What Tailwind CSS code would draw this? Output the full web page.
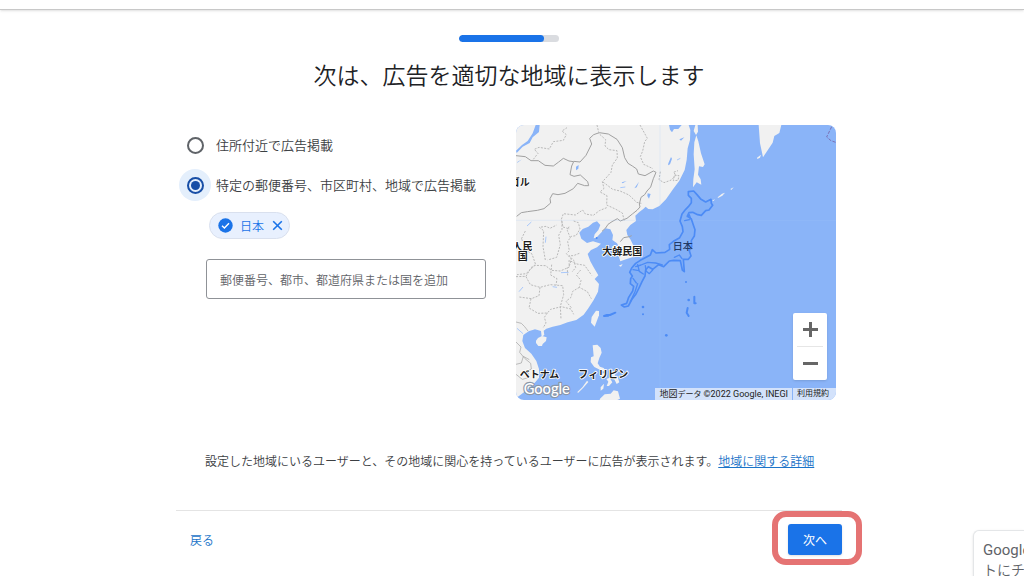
<!DOCTYPE html>
<html lang="ja">
<head>
  <meta charset="UTF-8" />
  <meta name="viewport" content="width=device-width, initial-scale=1.0" />
  <title>広告の地域設定</title>
  <script src="https://cdn.jsdelivr.net/npm/@tailwindcss/browser@4"></script>
</head>
<body class="bg-white text-[#3c4043] font-['Noto_Sans_CJK_JP',sans-serif]">
<div class="relative min-h-screen overflow-hidden">

  <header class="h-2.5 border-b border-[#c8c8c8] shadow-sm"></header>

  <main class="pr-1.5">
    <div class="max-w-[666px] mx-auto">

      <div class="w-[100px] h-[7px] mx-auto mt-[25px] rounded-full bg-[#dadce0] overflow-hidden" role="progressbar" aria-label="進捗" aria-valuenow="85" aria-valuemin="0" aria-valuemax="100">
        <div class="h-full rounded-full bg-[#1a73e8]" style="width: 85%"></div>
      </div>

      <h1 class="mt-4 text-center text-[23px] leading-8 font-[350] text-[#202124]">次は、広告を適切な地域に表示します</h1>

      <section class="mt-[35px] flex flex-wrap justify-between gap-y-6 pr-1.5">
        <form class="w-[310px] pt-1" onsubmit="return false">
          <label class="flex items-center h-8 ml-[3px] gap-[5px] text-[13px] font-[350] whitespace-nowrap">
            <span class="size-8 shrink-0 rounded-full flex items-center justify-center">
              <input type="radio" name="area" class="appearance-none size-[17px] rounded-full border-2 border-[#5f6368]" />
            </span>
            住所付近で広告掲載
          </label>
          <label class="flex items-center h-8 mt-2 ml-[3px] gap-[5px] text-[13px] font-[350] whitespace-nowrap">
            <span class="size-8 shrink-0 rounded-full bg-[#e4effc] flex items-center justify-center">
              <input type="radio" name="area" checked class="appearance-none size-[17px] rounded-full border-2 border-[#174ea6] bg-[#174ea6] bg-clip-content p-[2px]" />
            </span>
            特定の郵便番号、市区町村、地域で広告掲載
          </label>

          <div class="mt-[11px] ml-[33px] flex w-fit items-center h-[27px] pl-2 pr-1.5 rounded-full border border-[#d9e0ee] bg-[#e8f0fe] text-xs text-[#1a73e8]">
            <svg class="size-[15px]" viewBox="0 0 15 15" aria-hidden="true">
              <circle cx="7.5" cy="7.5" r="7.2" fill="#1a73e8" />
              <path d="M4 7.8l2.4 2.3 4.6-4.8" fill="none" stroke="#fff" stroke-width="1.4" />
            </svg>
            <span class="ml-[7px] font-[350]">日本</span>
            <button type="button" class="ml-2 cursor-pointer" aria-label="日本を削除">
              <svg class="size-[11px]" viewBox="0 0 11 11" fill="none" stroke="#1a73e8" stroke-width="1.6" aria-hidden="true">
                <path d="M1.2 1.2l8.6 8.6M9.8 1.2L1.2 9.8" />
              </svg>
            </button>
          </div>

          <div class="mt-5 ml-[30px]">
            <input type="text" aria-label="地域を追加" placeholder="郵便番号、都市、都道府県または国を追加" class="block w-full h-10 px-[13px] rounded-[3px] border border-[#8f9297] text-xs font-[350] placeholder:text-[#5f6368] outline-none" />
          </div>
        </form>

        <div class="relative w-80 h-[275px] rounded-lg overflow-hidden bg-[#8ab4f8]">
          <svg class="w-full h-full" viewBox="15 15 960 825" preserveAspectRatio="xMidYMid slice" role="img" aria-label="地図">
            <!-- 大陸 -->
            <path fill="#f1f1f1" d="M15 15H533L538 30 537 60 530 85 527 120 521 150 505 182 487 206 465 238 445 258 425 268 412 267 404 260 396 268 385 276 373 287 375 303 358 315 346 330 349 345 358 358 369 380 374 398 366 411 345 418 328 424 323 408 328 388 318 370 304 360 306 345 298 328 283 325 270 338 256 353 248 355 251 343 262 330 268 315 258 304 246 308 232 320 215 327 205 338 211 356 228 369 246 364 270 371 258 382 240 390 230 402 238 424 247 440 262 466 251 477 264 492 261 515 248 540 232 565 218 584 196 600 170 607 148 615 125 620 106 626 98 632 100 645 92 650 90 633 72 628 53 634 37 645 34 663 42 684 61 701 76 723 84 747 84 773 70 790 48 810 25 827 15 835Z" />
            <!-- サハリン・カムチャツカ・島 -->
            <g fill="#f1f1f1">
              <path d="M553 15l7 0 1 20-6 10-7-12z M556 46l6 18 8 36 11 33-5 8-12-2-3 25 8 14 2 16-14-7-11 15 1-24 4-30-3-45 2-36z" />
              <path d="M743 15h68l-6 24-15 9-5 20-12 18-17 26-9-42z" />
              <path d="M738 113l12-9-3 9-8 4zM620 232l13-11 9-3-8 9-13 7zM658 207l10-5-7 8zM603 243l8-6-2 5zM323 437l12-5-5 8z" />
              <path d="M75 662l6-8 12-6 14 4-2 11-10 9-2 6-11 0-7-9z" />
              <path d="M255 572l9 1 0 13-13 34-11-12 2-17z" />
              <path d="M245 676l14-2 10 10 3 14-7 16-5 16 7 10 11 4 7 10-9 0-14-7-12-6-11-15 1-14 8-3z" />
              <path d="M228 782l4 4-15 17-16 16-2-3 15-14zM268 761l16-2 3 13-10 4zM292 747l12 7 10 11-7 5-10-8zM286 777l10-4 8 14-10 11-7 0 5-13zM308 774l12-3 5 16-8 5zM269 802l10-11-2 15-8 6zM267 836l14-13 18-2 9-10 13 3 6 22-8 4-53 0z" />
            </g>
            <path fill="#8ab4f8" d="M15 92l18-17 17-12 15-23 9-25h12l-2 21-19 16-9 17-21 11-18 19zM474 15h38l-10 12-13 0-6 10-6-8zM195 140l8-5-1 11-7 5zM410 220l9 2-5 14-5-8zM472 130l8-19 3 5-6 17-6 3zM332 187l15-4-12 7zM370 205l14-20-7 17zM505 58l15-6-10 10zM18 129l15-11-13 7z" />
            <path fill="none" stroke="#a9c8fa" stroke-width="3" d="M328 203l15-2M105 350l-2 18M48 318l13-12M18 625l18 16M150 458l23-1M24 515l12-14M125 500l13 2M498 120l10-5" />
            <!-- 国境 -->
            <g fill="none" stroke="#a0a0a0" stroke-width="3" stroke-linejoin="round">
              <path d="M15 107l28 3 17 12 22 0 20 14 25 2 16-12 14-11 17 8 14 2-6 13-5 26 12 5 19-4 22 20 3 12-12 0-21-7-13 16-25 14-21 4-16-3-8 15 2 13-20 17-20 5-30 4-18 3-14 11" />
              <path d="M188 124l19 2 18-20 17-34-6-17 12-11 17-6 27 4 26 16 16 25 7 30 10 17 13 8 13 9 5 15 20 5 25-14 8 4-8 19-8 25-11 12-7 11-11 8-5 20 2 9-9 10-14 11-16 13-20 8-9-7-16 9-12 8-7 11-11 10" />
              <path d="M328 365l10-12 17-3 7-3" />
              <path stroke-width="2" d="M15 606l16 4 10 10 10 13M15 666l15 15-4 16 15 18 18 15 2 17-9 5 0 21-18 5-19-15M15 733l16-4 6-20 18 10" />
            </g>
            <g fill="none" stroke="#b9b9b9" stroke-width="3" stroke-dasharray="6 4">
              <path d="M67 118l14-18-11-12 14-6 31 5 12-22 30-4 9-17-13-11 15-10" />
              <path d="M258 15l6 26 20 18-2 19 12 11 24 3 1 22-15 21-4 22-16 18-10 10 5 20-12 11 21 11-1 28 26 12 21 12 6 23M276 186l29 22 22 5 27 12 23 22 14 3" />
              <path d="M387 15l22 40-8 10-6 28-7 17 10 23 28 13M448 155l-4 24 15 9 22-8 15-15-9-8 14-5" />
              <path d="M287 263l-22 9-18 14-24-4-8-12-22 15-36-4-6 17 5 23 20 6M153 304l0 24-10 18 5 28-11 38-27 8M103 420l-7-40 2-48-13-10 20-3 12 6 20-10M43 333l-13 26 14 5-3 24 22 14 11 32-29 27-27 3M188 303l14 5 5 19-12 20-14 2-11 15 5 28-9 9 15 16-5 18-7 10 1 21M174 320l-5 12 9 21M205 400l-18 7-13 0 15 15 5 21-11 13" />
              <path d="M15 470l30-1 15-26 10-7 34 1 17 14 27 2 27-12-1-20 24 11 23 4 21 30M45 470l13 24 29 8 31-8 37 3 3 27-10 35 2 39M122 434l-3 31 19 11-3 20M87 502l-3 25-23 9-36-5M60 536l-6 28 27 16 28-1 10-11 32-8 29 7 8 16M209 450l-13 15 14 16-5 21 24 13 12 21M205 502l-20 12-5 18-15 12 16 19M109 579l-9 13 5 17-9 15" />
              <path d="M490 165l14 2-3 14-14 1z" />
            </g>
            <path d="M962 20l-15 31 13 11 14 5" fill="none" stroke="#7b72b5" stroke-width="3" stroke-dasharray="10 4" />
            <!-- 緯線と経線 -->
            <path d="M15 301H975M447 15V840" stroke="#a5c7fb" stroke-opacity=".3" stroke-width="2" />
            <!-- 日本 -->
            <path fill="#83b0f7" stroke="#4c8bf5" stroke-width="5" stroke-linejoin="round" d="M532 215L548 213 558 224 570 238 584 246 600 238 601 250 605 256 594 270 584 272 571 286 560 284 545 277 534 278 529 288 541 297 547 315 552 329 550 348 541 362 542 380 535 392 540 408 532 418 517 418 520 455 514 450 508 422 488 421 475 423 458 440 443 434 425 448 412 440 404 450 402 468 393 485 386 500 375 522 364 536 352 558 340 561 331 555 347 550 353 532 365 513 368 499 358 491 359 476 364 468 356 457 362 444 374 430 388 421 418 405 424 389 435 399 462 397 476 388 475 374 490 362 506 353 516 335 514 320 507 303 513 282 524 268 532 260 541 248 541 235 532 226Z" />
            <g fill="none" stroke="#4c8bf5" stroke-width="4" stroke-linecap="round" stroke-linejoin="round">
              <path d="M374 440l16-5 20-8 24 2 20 6M380 434l5 20 12 8M366 449l18 3M403 437l2 16 10 8 10-11M529 290l6-6 4 12M521 302l14-3M366 475l10 14M490 412l15-7 8 11M358 545l14-30 8-24" />
              <path d="M279 588l9-3 9 0 16-7M281 588l11-1M550 530v20l4 0M530 564l-3 14 6 10" stroke-width="6" />
            </g>
            <g fill="#4c8bf5">
              <circle cx="396" cy="561" r="4" /><circle cx="396" cy="583" r="3" />
              <circle cx="466" cy="646" r="4" /><circle cx="525" cy="486" r="3" />
              <circle cx="533" cy="540" r="4" /><circle cx="257" cy="354" r="3" />
            </g>
            <!-- 地名 -->
            <g font-size="30" font-weight="700" fill="#1c1c1c" stroke="#fff" stroke-width="5" stroke-linejoin="round" paint-order="stroke">
              <text x="-4" y="198">ゴル</text>
              <text><tspan x="4" y="389">人民</tspan><tspan x="20" y="419">国</tspan></text>
              <text x="274" y="404">大韓民国</text>
              <text x="26" y="775">ベトナム</text>
              <text x="202" y="775">フィリピン</text>
            </g>
            <text x="485" y="390" font-size="30" font-weight="500" fill="#1f3a68">日本</text>
            <text x="38" y="822" font-size="44" font-weight="500" font-family="Lato, sans-serif" fill="#fff" stroke="#8a96a8" stroke-width="7" stroke-linejoin="round" paint-order="stroke">Google</text>
          </svg>

          <div class="absolute right-[9px] bottom-5 w-[34px] rounded-[2px] bg-white shadow flex flex-col items-center">
            <button type="button" class="w-full h-[33px] flex items-center justify-center cursor-pointer" aria-label="拡大">
              <svg class="size-[15px]" viewBox="0 0 15 15" stroke="#666" stroke-width="3" aria-hidden="true"><path d="M0 7.5h15M7.5 0v15" /></svg>
            </button>
            <div class="w-[26px] h-px bg-[#e6e6e6]"></div>
            <button type="button" class="w-full h-[33px] flex items-center justify-center cursor-pointer" aria-label="縮小">
              <svg class="size-[15px]" viewBox="0 0 15 15" stroke="#666" stroke-width="3" aria-hidden="true"><path d="M0 7.5h15" /></svg>
            </button>
          </div>

          <div class="absolute right-0 bottom-0 h-3 flex items-center text-[8px] leading-3 text-[#222] whitespace-nowrap font-['Roboto','Noto_Sans_CJK_JP',sans-serif]">
            <span class="px-1 bg-[#d3e2fb]"><span class="text-[9px]">地図</span>データ <span class="text-[9px]">©2022 Google, INEGI</span></span>
            <a href="#" class="ml-px pl-1 pr-[7px] bg-[#d3e2fb]">利用規約</a>
          </div>
        </div>
      </section>

      <p class="mt-[51px] pl-[29px] text-xs leading-5 font-[350] whitespace-nowrap">設定した地域にいるユーザーと、その地域に関心を持っているユーザーに広告が表示されます。<a href="#" class="text-[#1a73c8] underline">地域に関する詳細</a></p>

      <footer class="mt-[39px] pt-[13px] pl-3.5 border-t border-[#e4e4e4] flex items-center justify-between text-xs">
        <a href="#" class="text-[#1a73c8] font-[350]">戻る</a>
        <div class="relative">
          <button type="button" class="block w-[54px] h-[31px] rounded-[3px] bg-[#1a73e8] text-white shadow cursor-pointer">次へ</button>
          <div class="absolute -left-4 -right-5 -top-[13px] -bottom-[10px] border-6 border-[#e57373] rounded-[14px] pointer-events-none"></div>
        </div>
      </footer>
    </div>
  </main>

  <aside class="absolute right-0 bottom-0 w-[51px] h-[46px] pl-[9px] pt-2.5 overflow-hidden whitespace-nowrap border-t border-l border-[#e4e6e8] rounded-tl-md bg-white shadow text-[14px] leading-[19px] text-[#5f6368]">
    <p class="text-[15px] font-['Roboto',sans-serif]">Google</p>
    <p class="font-[350]">トにチ</p>
  </aside>

</div>
</body>
</html>
